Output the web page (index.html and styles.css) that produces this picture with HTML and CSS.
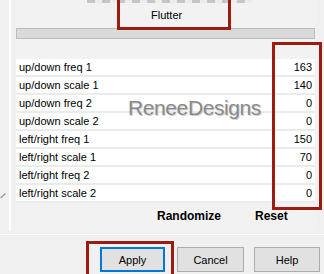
FILE: index.html
```html
<!DOCTYPE html>
<html>
<head>
<meta charset="utf-8">
<link rel="stylesheet" href="styles.css">
</head>
<body>
<div class="dialog">
  <div class="main">
    <div class="gutter">
      <svg class="tick" width="6" height="6" viewBox="0 0 6 6"><path d="M0.5 5 L5.5 0.5" stroke="#9a9a9a" stroke-width="1.3" fill="none"/></svg>
    </div>
    <div class="panel">
      <div class="checker"></div>
      <div class="title">Flutter</div>
      <div class="scrollbar"></div>
      <div class="spacer"></div>
      <div class="rows">
        <div class="row"><span>up/down freq 1</span><span>163</span></div>
        <div class="row"><span>up/down scale 1</span><span>140</span></div>
        <div class="row"><span>up/down freq 2</span><span>0</span></div>
        <div class="row"><span>up/down scale 2</span><span>0</span></div>
        <div class="row"><span>left/right freq 1</span><span>150</span></div>
        <div class="row"><span>left/right scale 1</span><span>70</span></div>
        <div class="row"><span>left/right freq 2</span><span>0</span></div>
        <div class="row"><span>left/right scale 2</span><span>0</span></div>
      </div>
      <div class="actions">
        <span class="act rand">Randomize</span>
        <span class="act">Reset</span>
      </div>
    </div>
  </div>
  <div class="sep"></div>
  <div class="buttons">
    <button class="btn primary">Apply</button>
    <button class="btn cancel">Cancel</button>
    <button class="btn help">Help</button>
  </div>
  <div class="mark mark-title"></div>
  <div class="mark mark-values"></div>
  <div class="mark mark-apply"></div>
  <div class="watermark">ReneeDesigns</div>
</div>
</body>
</html>
```
FILE: styles.css
```css
* { box-sizing: border-box; }
html, body {
  margin: 0;
  padding: 0;
  width: 324px;
  height: 274px;
  overflow: hidden;
  background: #f0f0f0;
  font-family: "Liberation Sans", Arial, sans-serif;
  font-size: 11px;
  color: #000;
}
.dialog {
  position: relative;
  width: 324px;
  height: 274px;
  display: flex;
  flex-direction: column;
}
.main {
  display: flex;
  height: 231px;
}
.gutter {
  width: 16px;
  flex: none;
  background: linear-gradient(to right, #f0f0f0 9px, #ffffff 9px, #ffffff 11px, #f0f0f0 11px);
  padding-top: 193px;
}
.tick { display: block; }
.panel {
  width: 301px;
  flex: none;
  background: #f2f2f2;
  display: flex;
  flex-direction: column;
  padding-right: 2px;
}
.checker {
  height: 3px;
  margin-left: 71px;
  width: 165px;
  background: repeating-linear-gradient(to right, #c6c6c6 0, #c6c6c6 8px, #ececec 8px, #ececec 15px);
}
.title {
  height: 25px;
  line-height: 24px;
  padding-left: 135px;
  font-size: 11px;
}
.scrollbar {
  height: 11px;
  border: 1px solid #bdbdbd;
  background: #dadada;
}
.spacer { height: 20px; }
.rows {
  display: flex;
  flex-direction: column;
}
.row {
  height: 18px;
  border-bottom: 2px solid #ebebeb;
  background: #ffffff;
  display: flex;
  justify-content: space-between;
  align-items: center;
  padding: 0 3px 0 3px;
  line-height: 16px;
}
.actions {
  flex: 1;
  display: flex;
  align-items: center;
  padding-left: 141px;
  padding-bottom: 2px;
  font-weight: bold;
  font-size: 12px;
}
.rand { margin-right: 34px; }
.sep {
  height: 4px;
  border-bottom: 1px solid #ffffff;
}
.buttons {
  display: flex;
  padding-top: 12px;
  padding-left: 100px;
}
.btn {
  height: 25px;
  font-family: "Liberation Sans", Arial, sans-serif;
  font-size: 11px;
  color: #000;
  background: #e1e1e1;
  border: 1px solid #adadad;
  padding: 0;
  margin: 0;
}
.primary {
  width: 65px;
  border: 2px solid #0078d7;
  margin-right: 12px;
}
.cancel { width: 67px; margin-right: 10px; }
.help { width: 66px; }
.mark {
  position: absolute;
  border: 3px solid #9b1c10;
}
.mark-title { left: 117px; top: -5px; width: 114px; height: 35px; }
.mark-values { left: 272px; top: 42px; width: 50px; height: 168px; }
.mark-apply { left: 86px; top: 241px; width: 88px; height: 40px; }
.watermark {
  position: absolute;
  left: 128px;
  top: 96px;
  font-size: 21px;
  color: #8a8a8a;
  letter-spacing: -0.4px;
  text-shadow: 1px 1px 0 #d0d0d0;
}
```
